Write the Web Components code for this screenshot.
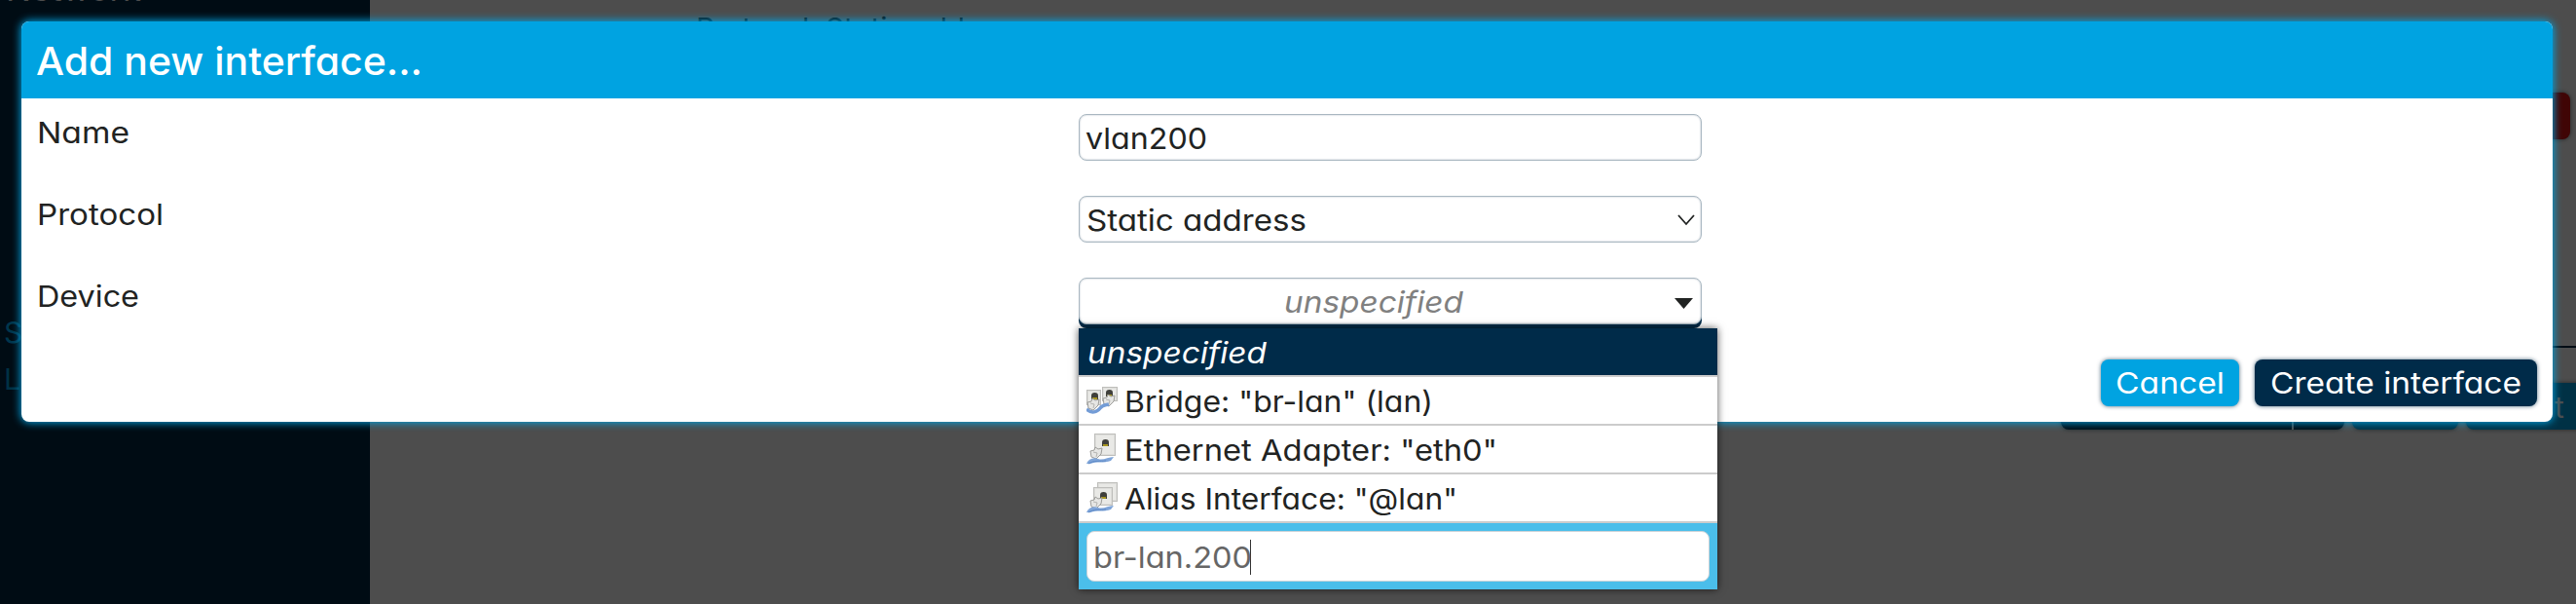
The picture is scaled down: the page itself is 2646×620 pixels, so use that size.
<!DOCTYPE html>
<html lang="en"><head><meta charset="utf-8"><title>Interfaces</title>
<style>html,body{margin:0;height:620px;overflow:hidden;background:#4d4d4d}</style></head>
<body>
<app-shell>
  <page-backdrop slot="page"></page-backdrop>
  <modal-dialog heading="Add new interface...">
    <form-row><fit-label w="95">Name</fit-label><text-field slot="field"><fit-label w="125">vlan200</fit-label></text-field></form-row>
    <form-row><fit-label w="130">Protocol</fit-label><select-field slot="field"><fit-label w="226">Static address</fit-label></select-field></form-row>
    <form-row><fit-label w="105">Device</fit-label><device-dropdown slot="field"></device-dropdown></form-row>
    <action-button slot="actions"><fit-label w="112">Cancel</fit-label></action-button>
    <action-button slot="actions" primary><fit-label w="258">Create interface</fit-label></action-button>
  </modal-dialog>
</app-shell>
<script>
function define(name, html, init) {
  const t = document.createElement('template');
  t.innerHTML = html;
  customElements.define(name, class extends HTMLElement {
    constructor() {
      super();
      this.attachShadow({mode: 'open'}).append(t.content.cloneNode(true));
    }
    connectedCallback() { if (init) init(this, this.shadowRoot); }
  });
}

define('app-shell', `<style>
:host{display:grid;position:relative;width:2646px;height:620px;overflow:hidden;box-sizing:border-box;
font:380 30px/48px Inter,"Liberation Sans",sans-serif;font-feature-settings:"cv11";color:#212322}
.page,.over{grid-area:1/1;min-width:0}
.over{padding:22px 24px 0 22px;z-index:1}
</style><div class="page"><slot name="page"></slot></div><div class="over"><slot></slot></div>`);

define('page-backdrop', `<style>
:host{display:flex;height:620px;background:#4d4d4d;position:relative;overflow:hidden}
aside{width:380px;height:620px;background:#000c14}
.t,.b,.l{position:absolute;white-space:nowrap}
.b{height:48px;border-radius:8px;box-shadow:0 0 4px #0008}
</style><aside></aside>
<span class="t" style="left:6px;top:-34px;color:#4d4d4d"><fit-label w="139">Network</fit-label></span>
<span class="t" style="left:4px;top:317px;color:#00364d">S</span>
<span class="t" style="left:4px;top:365px;color:#003145">L</span>
<span class="t" style="left:715px;top:5px;color:#0a0a0a"><fit-label w="335">Protocol: Static address</fit-label></span>
<span class="b" style="left:2560px;width:80px;top:95px;background:#400505"></span>
<span class="l" style="left:2600px;width:46px;top:355px;height:2px;background:#000c14"></span>
<span class="b" style="left:2117px;width:291px;top:393px;background:#000c14"></span>
<span class="l" style="left:2354px;width:2px;top:393px;height:48px;background:#4d4d4d"></span>
<span class="b" style="left:2416px;width:109px;top:393px;background:#003145"></span>
<span class="b" style="left:2533px;width:130px;top:393px;background:#003145"></span>
<span class="t" style="left:2624px;top:394px;color:#4d4d4d">t</span>`);

define('modal-dialog', `<style>
:host{display:flex;flex-direction:column;height:411px;border-radius:8px;background:#fff;box-shadow:0 0 8px 1px #00a3e1}
header{height:79px;box-sizing:border-box;padding:1px 15px 0;background:#00a3e1;color:#fff;border-radius:8px 8px 0 0;font-size:40px;line-height:80px;font-weight:550}
.rows{display:flex;flex-direction:column;padding:16px 16px 0;gap:36px}
footer{display:flex;justify-content:flex-end;gap:16px;padding:0 16px 16px;margin-top:auto}
</style><header><fit-label w="397"></fit-label></header><div class="rows"><slot></slot></div><footer><slot name="actions"></slot></footer>`,
(el, root) => { root.querySelector('fit-label').textContent = el.getAttribute('heading'); });

define('form-row', `<style>
:host{display:grid;grid-template-columns:1070px 640px;height:48px}
.label{line-height:38px}
</style><div class="label"><slot></slot></div><slot name="field"></slot>`);

const box = 'height:48px;box-sizing:border-box;border:1px solid #a9b7c1;border-radius:8px;background:#fff;box-shadow:inset 0 0 2px #002b4955;';
define('text-field', `<style>:host{display:block;${box}padding-left:6px;line-height:48px}</style><slot></slot>`);
define('select-field', `<style>
:host{display:flex;justify-content:space-between;align-items:center;${box}padding:2px 6px 0 7px}
svg{width:18px;height:12px}
</style><slot></slot><svg viewBox="0 0 18 12"><path d="M1 1L9 10L17 1" fill="none" stroke="#212322" stroke-width="1.800"/></svg>`);

define('device-dropdown', `<style>
:host{display:block;position:relative;height:48px}
.field{display:grid;grid-template-columns:1fr 36px;grid-template-rows:46px;align-items:center;${box}box-shadow:inset 0 0 2px #002b4955,0 4px 0 #002b49;padding-top:1px}
.field fit-label{justify-self:center;font-style:italic;color:#808080;margin-left:2px}
svg{width:19px;height:11px;justify-self:center;margin-top:2px}
.menu{position:absolute;left:0;top:52px;width:656px;height:268px;box-shadow:0 0 8px #000a;background:#fff;display:flex;flex-direction:column}
.input{height:68px;box-sizing:border-box;background:#4bbeea;padding:8px}
.input div{height:52px;box-sizing:border-box;border:1px solid #cbd3d8;border-radius:8px;background:#fff;padding:2px 7px 0 6px;display:flex;align-items:center;color:#666}
.caret{width:1px;height:36px;background:#333;margin-left:-2px;margin-top:-1px}
</style>
<div class="field"><fit-label w="184">unspecified</fit-label><svg viewBox="0 0 19 10" preserveAspectRatio="none"><path d="M0 0H19L9.500 10Z" fill="#212322"/></svg></div>
<div class="menu">
<menu-option selected><fit-label w="184">unspecified</fit-label></menu-option>
<menu-option icon="bridge"><fit-label w="317">Bridge: "br-lan" (lan)</fit-label></menu-option>
<menu-option icon="ethernet"><fit-label w="383">Ethernet Adapter: "eth0"</fit-label></menu-option>
<menu-option icon="alias"><fit-label w="342">Alias Interface: "@lan"</fit-label></menu-option>
<div class="input"><div><fit-label w="163">br-lan.200</fit-label><span class="caret"></span></div></div>
</div>`);

define('menu-option', `<style>
:host{display:flex;align-items:center;gap:7px;height:46px;border-bottom:2px solid #ccc;padding:2px 8px 0;background:#fff}
:host([selected]){background:#002b49;color:#fff;font-style:italic;padding-left:9px}
port-icon{flex:none;margin-top:-2px}
</style><slot></slot>`, (el, root) => {
  const kind = el.getAttribute('icon');
  if (!kind) return;
  const i = document.createElement('port-icon');
  i.setAttribute('kind', kind);
  root.querySelector('slot').before(i);
});

const plate = (x, y, w, h) => `<rect x="${x + .5}" y="${y + .5}" width="${w - 1}" height="${h - 1}" fill="#dededb" stroke="#bebebb"/><rect x="${x + 2}" y="${y + 2}" width="${w - 4}" height="${h - 4}" fill="#e9e9e6"/>`;
const jack = (x, y) => `<path d="M${x} ${y + 7}v-4q0 -3 3.500 -3q3.500 0 3.500 3v4z" fill="#3f3f3b"/><path d="M${x + 1} ${y + 5}h5v2h-5z" fill="#a8961f"/>`;
const plug = (x, y) => `<path d="M${x} ${y + 4}l4 -1l1 -3l3 2l4 -1l-1 6l-5 5l-5 -2z" fill="#e6e6e4" stroke="#9c9c99"/><path d="M${x + 3} ${y + 5}l4 1l-1 4" fill="none" stroke="#b4b4b1"/>`;
const cable = `<path d="M0 31C2 26 7 24 12 26C17 28 22 24 28 24L25 28C18 31 10 28 4 31Z" fill="#7fa5d9"/><path d="M2 31C8 27 14 29 20 28" fill="none" stroke="#5d89c6"/>`;
const icons = {
  bridge: plate(0, 5, 15, 16) + plate(16, 2, 16, 15) + jack(5, 8) + jack(20, 5) + plug(1, 14) + plug(17, 10) +
    '<path d="M0 25C5 30 11 28 14 24S20 21 23 20" fill="none" stroke="#739cd6" stroke-width="3.500"/>',
  ethernet: plate(8, 0, 22, 23) + jack(16, 6) + plug(4, 14) + cable,
  alias: plate(11, 0, 21, 20) + plate(7, 5, 20, 19) + jack(14, 10) + plug(4, 15) + cable
};
define('port-icon', `<style>:host{display:block;width:32px;height:32px}svg{display:block}</style><svg width="32" height="32" viewBox="0 0 32 32"></svg>`,
(el, root) => { root.querySelector('svg').innerHTML = icons[el.getAttribute('kind')]; });

define('action-button', `<style>
:host{display:flex;justify-content:center;box-sizing:border-box;width:142px;height:48px;border-radius:8px;background:#00a3e1;color:#fff;line-height:49px;box-shadow:0 0 4px #002b49b0;font-weight:430}
:host([primary]){width:290px;background:#002b49}
</style><slot></slot>`);

/* Widens its letters so that the text takes up the width given in "w". */
define('fit-label', `<style>:host{display:inline-block;white-space:nowrap}span{display:inline-block;transform-origin:0 50%}</style><span><slot></slot></span>`, (el, root) => {
  const want = parseFloat(el.getAttribute('w'));
  const span = root.querySelector('span');
  const have = span.getBoundingClientRect().width;
  el.style.width = want + 'px';
  span.style.transform = `scaleX(${want / have})`;
});
</script>
</body></html>
